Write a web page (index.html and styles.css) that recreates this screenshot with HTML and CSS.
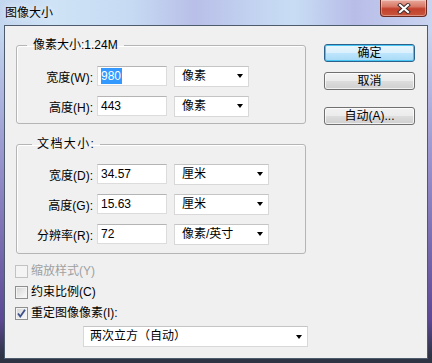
FILE: index.html
```html
<!DOCTYPE html>
<html lang="zh-CN">
<head>
  <meta charset="UTF-8" />
  <title>图像大小</title>
  <link rel="stylesheet" href="styles.css">
</head>
<body>
  <div class="window">

    <!-- Title bar -->
    <div class="titlebar">
      <span class="title">图像大小</span>
      <div class="close-btn">
        <svg width="14" height="11" viewBox="0 0 14 11">
          <path d="M3 2 L11 9 M11 2 L3 9" stroke="#3a2a2a" stroke-width="4" stroke-linecap="square" />
          <path d="M3 2 L11 9 M11 2 L3 9" stroke="#fff" stroke-width="2.2" stroke-linecap="square" />
        </svg>
      </div>
    </div>

    <!-- Dialog body -->
    <div class="client">
      <div class="main">
        <div class="groups">

          <fieldset class="group group-pixel">
            <legend>像素大小:1.24M</legend>
            <div class="row">
              <label>宽度(W):</label>
              <div class="input"><span class="selected">980</span></div>
              <div class="select">像素<span class="arrow"></span></div>
            </div>
            <div class="row">
              <label>高度(H):</label>
              <div class="input">443</div>
              <div class="select">像素<span class="arrow"></span></div>
            </div>
          </fieldset>

          <fieldset class="group group-doc">
            <legend>文档大小:</legend>
            <div class="row">
              <label>宽度(D):</label>
              <div class="input">34.57</div>
              <div class="select select-unit">厘米<span class="arrow"></span></div>
            </div>
            <div class="row">
              <label>高度(G):</label>
              <div class="input">15.63</div>
              <div class="select select-unit">厘米<span class="arrow"></span></div>
            </div>
            <div class="row">
              <label>分辨率(R):</label>
              <div class="input">72</div>
              <div class="select select-unit">像素/英寸<span class="arrow"></span></div>
            </div>
          </fieldset>

        </div>

        <div class="buttons">
          <button class="btn btn-default">确定</button>
          <button class="btn">取消</button>
          <button class="btn btn-auto">自动(A)...</button>
        </div>
      </div>

      <div class="options">
        <div class="check disabled"><span class="box"></span>缩放样式(Y)</div>
        <div class="check"><span class="box"></span>约束比例(C)</div>
        <div class="check">
          <span class="box">
            <svg width="11" height="11" viewBox="0 0 11 11">
              <path d="M2 5.5 L4.3 8.5 L9 1.8" fill="none" stroke="#3b4f8a" stroke-width="1.8" />
            </svg>
          </span>重定图像像素(I):
        </div>
      </div>

      <div class="select select-wide">两次立方（自动）<span class="arrow"></span></div>
    </div>

  </div>
</body>
</html>
```

FILE: styles.css
```css
body {
  margin: 0;
  width: 432px;
  height: 363px;
  overflow: hidden;
  font-family: "Liberation Sans", "Noto Sans CJK SC", sans-serif;
  font-size: 12px;
  color: #000;
}
.window {
  height: 363px;
  display: flex;
  flex-direction: column;
  background:
    linear-gradient(180deg, rgba(0,0,0,0) 0%, rgba(0,0,0,0) 9%, rgba(120,100,180,0.6) 45%, #5c4894 88%, #2e3444 98%),
    linear-gradient(90deg, #c3d6ef 0%, #cfe3f6 12%, #c6dbf3 30%, #b9bfe8 45%, #c2d2f0 58%, #c8ddf4 68%, #b8bde8 82%, #c9d4f0 100%);
}
.titlebar {
  height: 25px;
  display: flex;
  justify-content: space-between;
  align-items: flex-start;
  padding: 0 5px;
}
.title {
  margin-top: 4px;
  line-height: 16px;
  font-family: "Noto Sans CJK SC", sans-serif;
  text-shadow: 0 0 6px #fff;
}
.close-btn {
  width: 45px;
  height: 16px;
  border: 1px solid #6b2a22;
  border-top: none;
  border-radius: 0 0 4px 4px;
  background: linear-gradient(#e9a99b 0%, #d97a68 40%, #c2412c 55%, #c8553c 100%);
  box-shadow: inset 0 0 0 1px rgba(255,255,255,0.35);
  display: flex;
  align-items: center;
  justify-content: center;
}
.client {
  flex: 1;
  margin: 0 4px 4px;
  border: 1px solid #4d5b6d;
  background: #f0f0f0;
  padding: 12px 0 0 11px;
}
.main {
  display: flex;
}
.groups {
  width: 290px;
}
.group {
  margin: 0;
  padding: 0 0 7px 0;
  border: 1px solid #b5b5b5;
  border-radius: 3px;
  box-shadow: inset 1px 1px 0 #fff;
}
.group legend {
  margin-left: 10px;
  padding: 0 6px;
  line-height: 14px;
}
.group-doc {
  margin-top: 13px;
  padding-bottom: 9px;
}
.group-doc legend {
  margin-left: 15px;
  padding: 0 5px;
  letter-spacing: 1.4px;
}
.row {
  display: flex;
  align-items: center;
  height: 20px;
  margin-top: 10px;
}
.group-pixel .row:first-of-type {
  margin-top: 14px;
}
.group-doc .row:first-of-type {
  margin-top: 13px;
}
label {
  width: 76px;
  margin-right: 4px;
  text-align: right;
}
.input {
  width: 70px;
  height: 20px;
  box-sizing: border-box;
  border: 1px solid #dcdcdc;
  border-top-color: #b4b4b4;
  background: #fff;
  padding-left: 3px;
  line-height: 18px;
}
.selected {
  background: #3399ff;
  color: #fff;
  display: inline-block;
  line-height: 16px;
  padding-right: 1px;
}
.select {
  position: relative;
  width: 75px;
  height: 21px;
  box-sizing: border-box;
  margin-left: 7px;
  border: 1px solid #d8d8d8;
  border-top-color: #c4c4c4;
  background: #fff;
  padding-left: 7px;
  line-height: 19px;
  display: flex;
  justify-content: space-between;
  align-items: center;
}
.select-unit {
  width: 95px;
}
.arrow {
  width: 0;
  height: 0;
  margin-right: 5px;
  border-left: 3px solid transparent;
  border-right: 3px solid transparent;
  border-top: 4px solid #000;
}
.buttons {
  margin-left: 18px;
  width: 91px;
  display: flex;
  flex-direction: column;
}
.btn {
  height: 18px;
  margin-top: 10px;
  padding: 0;
  border: 1px solid #707070;
  border-radius: 3px;
  background: linear-gradient(#f2f2f2 0%, #ebebeb 50%, #dddddd 51%, #cfcfcf 100%);
  box-shadow: inset 0 0 0 1px rgba(255,255,255,0.7);
  font-family: "Liberation Sans", "Noto Sans CJK SC", sans-serif;
  font-size: 12px;
  line-height: 16px;
  color: #000;
}
.btn-default {
  margin-top: 6px;
  border-color: #2c628b;
  background: linear-gradient(#eaf6fd 0%, #d9f0fc 50%, #bee6fd 51%, #a7d9f5 100%);
  box-shadow: inset 0 0 0 1px #48c6f3;
}
.btn-auto {
  margin-top: 17px;
}
.options {
  margin: 11px 0 0 -1px;
  display: flex;
  flex-direction: column;
  gap: 8px;
}
.check {
  display: flex;
  align-items: center;
  height: 13px;
  line-height: 13px;
}
.box {
  width: 13px;
  height: 13px;
  box-sizing: border-box;
  margin-right: 3px;
  border: 1px solid #8e8f8f;
  background: linear-gradient(135deg, #d4d4d4 0%, #f4f4f4 80%);
  box-shadow: inset 0 0 0 1px #f4f4f4;
  display: flex;
  align-items: center;
  justify-content: center;
}
.check.disabled {
  color: #a0a0a0;
}
.check.disabled .box {
  border-color: #c2c2c2;
  background: #f4f4f4;
}
.select-wide {
  width: 225px;
  margin: 6px 0 0 67px;
  padding-left: 6px;
}
```
